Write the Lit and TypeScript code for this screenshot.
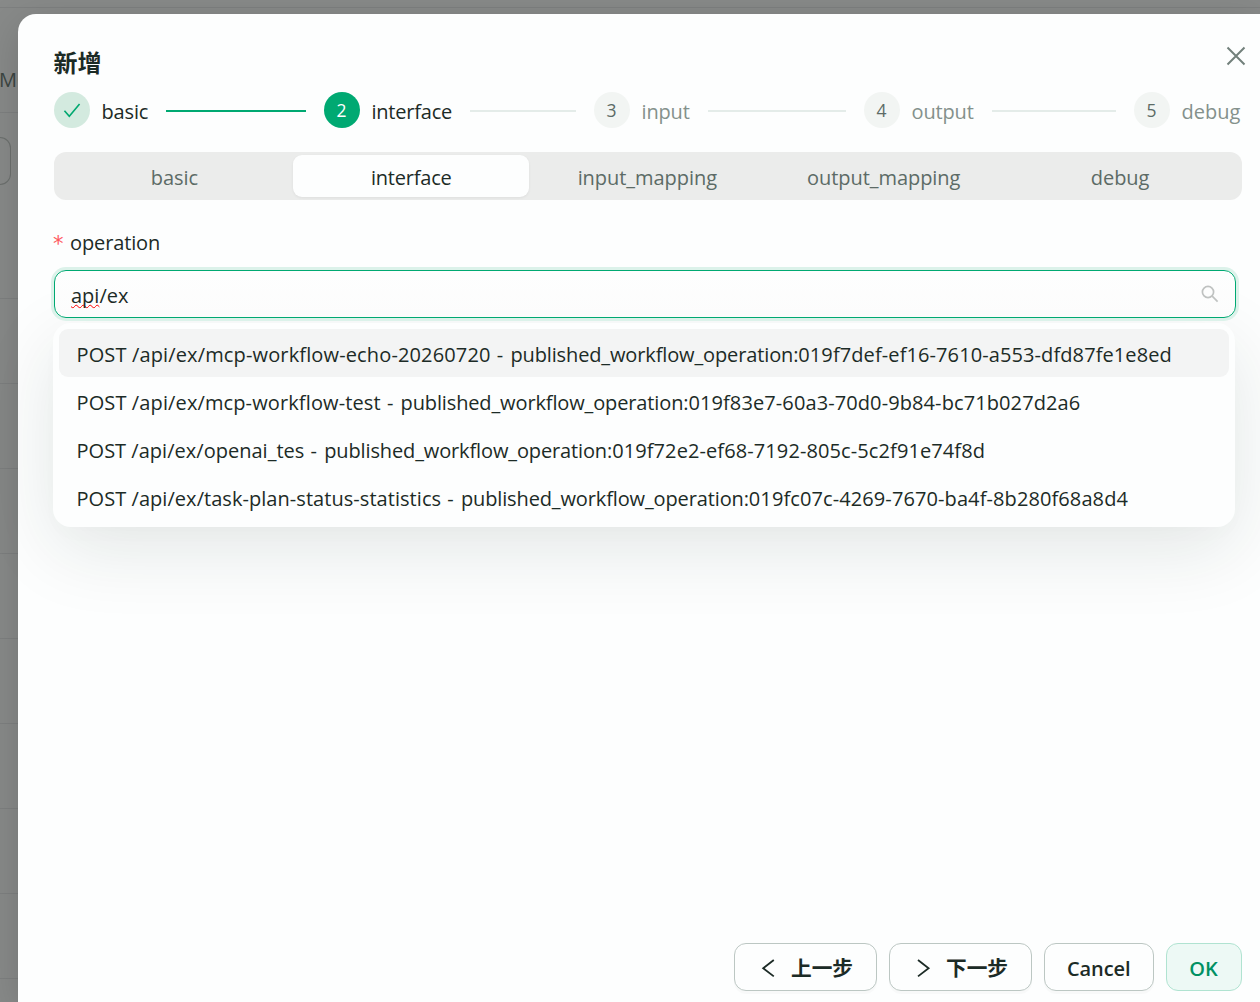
import { LitElement, html, css, svg } from "lit";
import { customElement, property } from "lit/decorators.js";

const SANS = css`"Open Sans", "Noto Sans CJK SC", sans-serif`;

const steps = [
  { label: "basic", state: "done", width: 46 },
  { label: "interface", state: "active", width: 80 },
  { label: "input", state: "wait", width: 48 },
  { label: "output", state: "wait", width: 62 },
  { label: "debug", state: "wait", width: 60 },
];

const tabs = ["basic", "interface", "input_mapping", "output_mapping", "debug"];

const options = [
  { path: "POST /api/ex/mcp-workflow-echo-20260720", id: "019f7def-ef16-7610-a553-dfd87fe1e8ed", tracking: 0.14 },
  { path: "POST /api/ex/mcp-workflow-test", id: "019f83e7-60a3-70d0-9b84-bc71b027d2a6", tracking: 0.12 },
  { path: "POST /api/ex/openai_tes", id: "019f72e2-ef68-7192-805c-5c2f91e74f8d", tracking: 0.02 },
  { path: "POST /api/ex/task-plan-status-statistics", id: "019fc07c-4269-7670-ba4f-8b280f68a8d4", tracking: 0.05 },
];

const shapes: Record<string, unknown> = {
  check: svg`<path d="M1.6 10.8 L7 17 L18.4 3.4" />`,
  close: svg`<path d="M1.5 1.5 L18.5 18.5 M18.5 1.5 L1.5 18.5" />`,
  search: svg`<circle cx="8" cy="8" r="5.6" /><path d="M12.2 12.2 L17.6 17.6" />`,
  left: svg`<path d="M14.8 2 L4.2 10.2 L14.8 18.4" />`,
  right: svg`<path d="M4 2 L14.6 10.2 L4 18.4" />`,
};

@customElement("line-icon")
export class LineIcon extends LitElement {
  static styles = css`
    :host { display: block; flex: none; }
    svg { display: block; width: 100%; height: 100%; fill: none; stroke: currentColor; stroke-width: var(--stroke, 1.6); overflow: visible; }
  `;
  @property() name = "";
  render() {
    return html`<svg viewBox="0 0 20 20" aria-hidden="true">${shapes[this.name]}</svg>`;
  }
}

@customElement("step-bar")
export class StepBar extends LitElement {
  static styles = css`
    :host { display: grid; grid-template-columns: repeat(4, 270px) 1fr; height: 36px; }
    .step { display: flex; align-items: center; height: 36px; min-width: 0; }
    .dot { flex: none; width: 36px; height: 36px; border-radius: 50%; display: flex; align-items: center; justify-content: center; background: #f2f5f3; color: #5c6b66; font-size: 17.5px; line-height: 36px; box-sizing: border-box; padding-right: 1px; }
    .label { flex: none; margin-left: 11.5px; margin-right: 0.5px; white-space: nowrap; line-height: 40px; height: 36px; color: #84918c; letter-spacing: -0.15px; }
    .rail { flex: 1; height: 2px; margin: 2px 18px 0; background: #e4ece9; }
    .done .dot { background: #d3eadf; color: #00a870; padding: 0; }
    .done .rail { background: #00a972; }
    .active .dot { background: #00a972; color: #fff; }
    .done .label, .active .label { color: #1c2b26; }
    .active .label { letter-spacing: -0.22px; }
    .step:last-child .label { letter-spacing: 0; }
    .tick { width: 18px; height: 18px; --stroke: 1.8; }
  `;
  render() {
    return steps.map((s, i) => html`
      <div class="step ${s.state}">
        <span class="dot">${s.state === "done" ? html`<line-icon class="tick" name="check"></line-icon>` : i + 1}</span>
        <span class="label" style="width:${s.width}px">${s.label}</span>
        ${i < steps.length - 1 ? html`<span class="rail"></span>` : null}
      </div>`);
  }
}

@customElement("app-root")
export class AppRoot extends LitElement {
  static styles = css`
    :host { display: block; position: relative; height: 1002px; overflow: hidden; background: #888a89; font-family: ${SANS}; font-size: 20px; color: #1c2b26; }
    * { box-sizing: border-box; }
    .page { height: 100%; display: flex; flex-direction: column; }
    .topline { flex: none; height: 8px; border-bottom: 1px solid #7e8080; }
    .heading { flex: none; height: 105px; padding-top: 57px; line-height: 30px; border-bottom: 1px solid #7e8080; color: #3c4642; text-indent: -1px; }
    .filter { flex: none; height: 186px; padding-top: 24px; border-bottom: 1px solid #7e8080; }
    .field { width: 11px; height: 48px; border: 1px solid #6c706e; border-left: 0; border-radius: 0 12px 12px 0; }
    .row { flex: none; height: 85px; border-bottom: 1px solid #7e8080; }
    .dialog { position: absolute; left: 18px; top: 14px; right: 0; bottom: 0; background: #fdfefe; border-radius: 18px 0 0 0; box-shadow: 0 9px 42px rgba(0, 0, 0, 0.16); padding: 30px 18px 11px 36px; display: flex; flex-direction: column; }
    .head { display: flex; justify-content: space-between; height: 48px; }
    .title { margin: 0 0 0 -0.5px; font-size: 24px; line-height: 38px; font-weight: 700; }
    .close { width: 20px; height: 20px; margin: 2px -4px 0 0; color: #72807b; --stroke: 2; }
    .tabs { margin-top: 24px; height: 48px; padding: 3px; border-radius: 12px; background: #ebeceb; display: grid; grid-template-columns: repeat(5, 1fr); }
    .tab { display: flex; align-items: center; justify-content: center; border-radius: 9px; color: #5c6b66; padding: 2px 1.4px 0 0; letter-spacing: -0.05px; }
    .tab.on { background: #fdfefe; color: #1c2b26; box-shadow: 0 1px 3px rgba(0, 0, 0, 0.06); letter-spacing: -0.2px; margin-right: 0.6px; padding-right: 0; }
    .caption { display: flex; margin-top: 26px; height: 34px; line-height: 33px; letter-spacing: -0.12px; }
    .star { color: #ff5a5f; width: 16px; margin-left: -1px; margin-right: 1px; font-family: "DejaVu Sans", sans-serif; font-size: 21px; line-height: 36px; }
    .combo { position: relative; margin: 10px 6px 0 0; }
    .input { position: relative; z-index: 1; height: 48px; border: 1px solid #00a972; border-radius: 12px; box-shadow: 0 0 0 3px #dcf2ea; background: linear-gradient(#fdfefe, #fcfcfc); display: flex; align-items: center; justify-content: space-between; padding: 2px 15px 0 16px; }
    .misspelt { text-decoration: underline wavy #f00 1.1px; text-underline-offset: 1px; text-decoration-skip-ink: none; }
    .lens { width: 20px; height: 20px; color: #bfc2c1; margin-top: -2px; --stroke: 1.7; }
    .menu { position: absolute; left: -1px; right: 1px; top: 53px; padding: 6px; border-radius: 18px; background: #fdfefe; box-shadow: 0 9px 24px rgba(0, 0, 0, 0.01), 0 22px 76px rgba(20, 50, 40, 0.11); }
    .option { height: 48px; line-height: 52px; padding: 0 17.5px; border-radius: 9px; white-space: nowrap; }
    .option.hot { background: #f3f4f4; }
    .dash { letter-spacing: 1px; white-space: pre; }
    .kind { letter-spacing: -0.13px; }
    .id { letter-spacing: 0.1px; }
    .foot { margin-top: auto; display: flex; justify-content: flex-end; gap: 12px; }
    .btn { height: 48px; border: 1px solid #bcc7c3; border-radius: 12px; background: #fdfefe; box-shadow: 0 3px 0 rgba(0, 0, 0, 0.02); display: flex; align-items: center; justify-content: center; gap: 12px; font-weight: 600; padding-top: 2px; }
    .nav { width: 143px; font-size: 20.7px; padding-left: 1px; line-height: 30px; }
    .cancel { width: 110px; letter-spacing: -0.1px; padding-right: 0.6px; }
    .ok { width: 76px; color: #009163; background: #edf9f5; border-color: #b0e3d1; box-shadow: none; padding-right: 1px; }
    .arrow { width: 20px; height: 20px; --stroke: 1.8; margin-top: -1px; }
  `;
  render() {
    return html`
      <div class="page">
        <div class="topline"></div>
        <div class="heading">MC</div>
        <div class="filter"><div class="field"></div></div>
        ${Array.from({ length: 9 }, () => html`<div class="row"></div>`)}
      </div>
      <section class="dialog">
        <header class="head">
          <h2 class="title">新增</h2>
          <line-icon class="close" name="close"></line-icon>
        </header>
        <step-bar></step-bar>
        <nav class="tabs">${tabs.map((t, i) => html`<span class="tab ${i === 1 ? "on" : ""}">${t}</span>`)}</nav>
        <label class="caption"><span class="star">*</span>operation</label>
        <div class="combo">
          <div class="input"><span><span class="misspelt">api</span>/ex</span><line-icon class="lens" name="search"></line-icon></div>
          <div class="menu">${options.map((o, i) => html`<div class="option ${i === 0 ? "hot" : ""}"><span style="letter-spacing:${o.tracking}px">${o.path}</span><span class="dash"> - </span><span class="kind">published_workflow_operation:</span><span class="id">${o.id}</span></div>`)}</div>
        </div>
        <footer class="foot">
          <div class="btn nav"><line-icon class="arrow" name="left"></line-icon>上一步</div>
          <div class="btn nav"><line-icon class="arrow" name="right"></line-icon>下一步</div>
          <div class="btn cancel">Cancel</div>
          <div class="btn ok">OK</div>
        </footer>
      </section>
    `;
  }
}
